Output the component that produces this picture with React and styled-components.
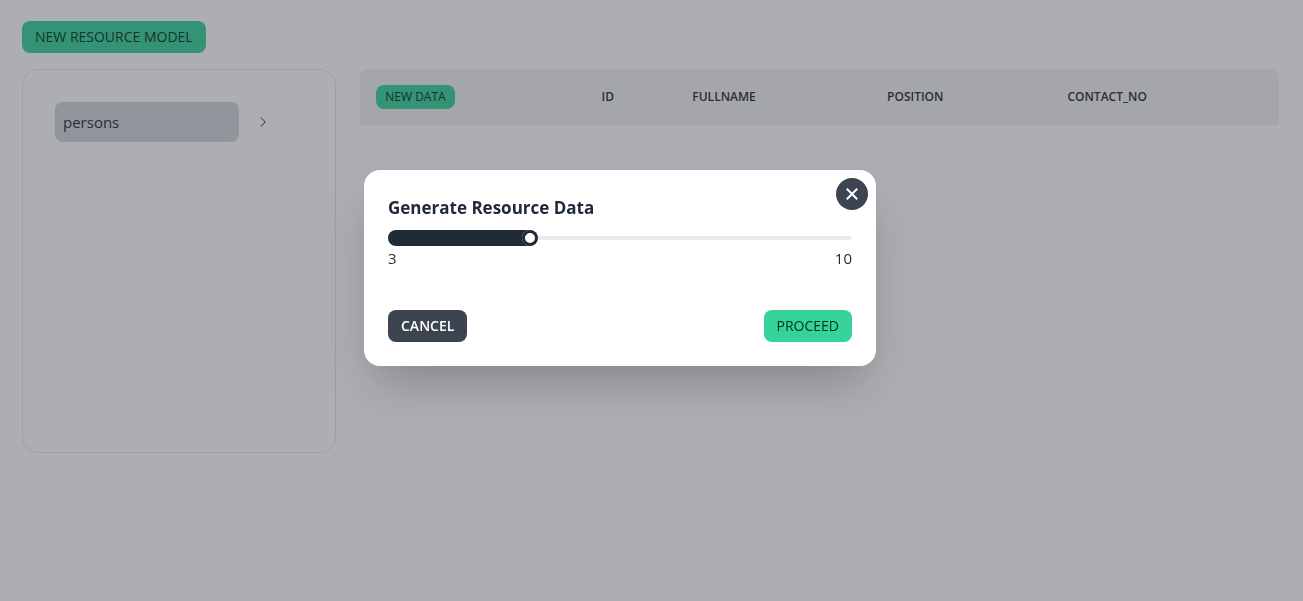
import React, { useState } from "react";
import styled, { createGlobalStyle } from "styled-components";

const GlobalStyle = createGlobalStyle`
  *, *::before, *::after { box-sizing: border-box; }
  html { background: #ffffff; }
  body {
    margin: 0;
    color: #1f2937;
    font-family: "Segoe UI", "Open Sans", "Noto Sans", sans-serif;
    font-size: 15px;
    font-weight: 400;
    line-height: 24px;
  }
  button, input { font: inherit; }
`;

const variants = {
  success: { background: "#36d399", color: "#003320", weight: 400 },
  neutral: { background: "#3d4451", color: "#ffffff", weight: 600 },
};

const Button = styled.button`
  display: inline-flex;
  align-items: center;
  justify-content: center;
  height: ${(p) => (p.$small ? 24 : 32)}px;
  padding: 0 ${(p) => (p.$small ? 8 : 12)}px;
  border: 1px solid transparent;
  border-radius: 8px;
  background: ${(p) => variants[p.$variant].background};
  color: ${(p) => variants[p.$variant].color};
  font-size: ${(p) => (p.$small ? 12 : 14)}px;
  font-weight: ${(p) => variants[p.$variant].weight};
  line-height: 16px;
  text-transform: uppercase;
  white-space: nowrap;
  cursor: pointer;
`;

const Page = styled.main`
  display: flex;
  flex-direction: column;
  align-items: flex-start;
  gap: 16px;
  padding: 21px 24px 24px 22px;
`;

const Columns = styled.div`
  display: grid;
  grid-template-columns: minmax(0, 1fr) minmax(0, 3fr);
  align-items: start;
  width: 100%;
`;

const Sidebar = styled.nav`
  min-height: 384px;
  padding: 32px;
  border: 1px solid #e5e7eb;
  border-radius: 16px;
`;

const ModelRow = styled.div`
  display: flex;
  align-items: center;
  padding-right: 16px;
`;

const ModelLink = styled.a`
  flex: 1;
  padding: 8px;
  border-radius: 8px;
  background: #d1d5db;
  color: inherit;
  text-decoration: none;
`;

const ExpandButton = styled.button`
  display: flex;
  align-items: center;
  justify-content: center;
  width: 48px;
  height: 32px;
  padding: 0;
  border: 0;
  background: transparent;
  color: #1f2937;
  cursor: pointer;
`;

const DataPanel = styled.section`
  padding-left: 24px;
`;

const Table = styled.table`
  width: 100%;
  border-collapse: separate;
  border-spacing: 0;
`;

const HeadCell = styled.th`
  padding: 16px;
  background: #f2f2f2;
  font-size: 12px;
  font-weight: 600;
  line-height: 16px;
  text-align: left;
  text-transform: uppercase;
  vertical-align: middle;

  &:first-child { border-top-left-radius: 8px; }
  &:last-child { border-top-right-radius: 8px; }
  ${Button} { vertical-align: top; }
`;

const Backdrop = styled.div`
  position: fixed;
  inset: 0;
  display: flex;
  align-items: center;
  justify-content: center;
  padding: 0 63px 65px 0;
  background: rgba(50, 53, 63, 0.4);
`;

const Dialog = styled.section`
  position: relative;
  width: 100%;
  max-width: 512px;
  padding: 24px;
  border-radius: 16px;
  background: #ffffff;
  box-shadow: 0 25px 50px -12px rgba(0, 0, 0, 0.25);
`;

const CloseButton = styled.button`
  position: absolute;
  top: 8px;
  right: 8px;
  display: flex;
  align-items: center;
  justify-content: center;
  width: 32px;
  height: 32px;
  padding: 0;
  border: 0;
  border-radius: 50%;
  background: #3d4451;
  color: #ffffff;
  cursor: pointer;
`;

const Title = styled.h2`
  margin: 0 0 8px;
  font-size: 17px;
  font-weight: 700;
  line-height: 28px;
`;

const Range = styled.input`
  display: block;
  width: 100%;
  height: 16px;
  margin: 0;
  overflow: hidden;
  appearance: none;
  border-radius: 16px;
  background: transparent;
  cursor: pointer;

  &::-webkit-slider-runnable-track {
    width: 100%;
    height: 4px;
    border-radius: 16px;
    background: #e9eaeb;
  }

  &::-webkit-slider-thumb {
    position: relative;
    top: 50%;
    width: 16px;
    height: 16px;
    appearance: none;
    border: 0;
    border-radius: 16px;
    background: #ffffff;
    color: #1f2937;
    transform: translateY(-50%);
    box-shadow: 0 0 0 3px #1f2937 inset, -1606px 0 0 1600px;
  }
`;

const Scale = styled.div`
  display: flex;
  justify-content: space-between;
`;

const Actions = styled.div`
  display: flex;
  justify-content: space-between;
  margin-top: 40px;
`;

const fields = ["id", "fullname", "position", "contact_no"];

export default function App() {
  const [count, setCount] = useState(3);

  return (
    <>
      <GlobalStyle />
      <Page>
        <Button $variant="success">New Resource Model</Button>
        <Columns>
          <Sidebar aria-label="Resource models">
            <ModelRow>
              <ModelLink href="#persons">persons</ModelLink>
              <ExpandButton aria-label="Expand persons">
                <svg width="16" height="16" viewBox="0 0 16 16" fill="none" stroke="currentColor" strokeWidth="1">
                  <path d="M5.7 3.5 10.3 8l-4.6 4.5" />
                </svg>
              </ExpandButton>
            </ModelRow>
          </Sidebar>
          <DataPanel>
            <Table>
              <thead>
                <tr>
                  <HeadCell>
                    <Button $variant="success" $small>New Data</Button>
                  </HeadCell>
                  {fields.map((field) => (
                    <HeadCell key={field} scope="col">{field}</HeadCell>
                  ))}
                </tr>
              </thead>
            </Table>
          </DataPanel>
        </Columns>
      </Page>
      <Backdrop>
        <Dialog role="dialog" aria-modal="true" aria-labelledby="generate-title">
          <CloseButton aria-label="Close">
            <svg width="16" height="16" viewBox="0 0 16 16" fill="none" stroke="currentColor" strokeWidth="2">
              <path d="m2.8 2.8 10.4 10.4M13.2 2.8 2.8 13.2" />
            </svg>
          </CloseButton>
          <Title id="generate-title">Generate Resource Data</Title>
          <Range
            type="range"
            min="0"
            max="10"
            value={count}
            aria-labelledby="generate-title"
            onChange={(event) => setCount(Number(event.target.value))}
          />
          <Scale>
            <span>{count}</span>
            <span>10</span>
          </Scale>
          <Actions>
            <Button $variant="neutral">Cancel</Button>
            <Button $variant="success">Proceed</Button>
          </Actions>
        </Dialog>
      </Backdrop>
    </>
  );
}
